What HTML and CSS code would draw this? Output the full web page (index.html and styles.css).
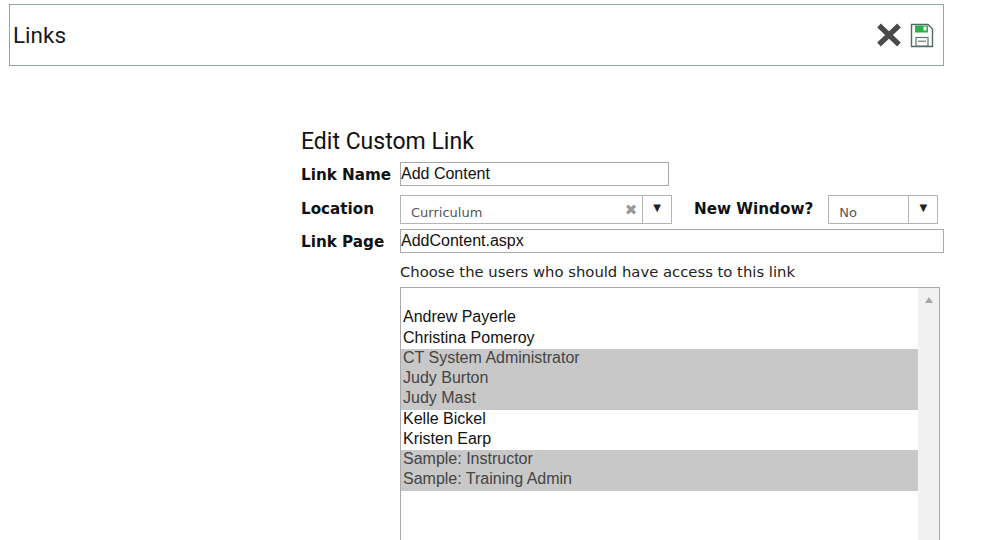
FILE: index.html
```html
<!DOCTYPE html>
<html lang="en">
<head>
<meta charset="utf-8">
<title>Links</title>
<link rel="stylesheet" href="styles.css">
</head>
<body>
<header class="topbar">
  <h1 class="title">Links</h1>
  <div class="actions">
    <svg class="icon-close" width="26" height="24" viewBox="0 0 26 24" aria-label="Close"><path d="M3 2.5 23 21.5M23 2.5 3 21.5" fill="none" stroke="#4a4a4a" stroke-width="5.2"/></svg>
    <svg class="icon-save" width="24" height="25" viewBox="0 0 24 25" aria-label="Save">
      <path d="M1.5 1.5H18L22.5 6V23.5H1.5Z" fill="#fff" stroke="#4d6b62" stroke-width="1.4"/>
      <rect x="5" y="2.5" width="13" height="7" fill="#2fae4e"/>
      <rect x="13.5" y="3.5" width="3" height="4" fill="#e8f5ea"/>
      <rect x="6" y="14.5" width="12" height="8.5" fill="#fff" stroke="#66706c" stroke-width="1.2"/>
      <rect x="8" y="17.5" width="8" height="1.6" fill="#8a9490"/>
    </svg>
  </div>
</header>

<main class="form">
  <h2 class="heading">Edit Custom Link</h2>
  <div class="row row-name">
    <div class="label">Link Name</div>
    <div class="field field-name">Add Content</div>
  </div>
  <div class="row row-location">
    <div class="label label-loc">Location</div>
    <div class="select select-location">
      <span class="select-value">Curriculum</span>
      <span class="clear">✖</span>
      <span class="arrow">▼</span>
    </div>
    <div class="label label-window">New Window?</div>
    <div class="select select-window">
      <span class="select-value">No</span>
      <span class="arrow">▼</span>
    </div>
  </div>
  <div class="row row-page">
    <div class="label">Link Page</div>
    <div class="field field-page">AddContent.aspx</div>
  </div>
  <div class="hint">Choose the users who should have access to this link</div>
  <div class="listbox">
    <div class="options">
      <div class="option blank">&nbsp;</div>
      <div class="option">Andrew Payerle</div>
      <div class="option">Christina Pomeroy</div>
      <div class="option selected">CT System Administrator</div>
      <div class="option selected">Judy Burton</div>
      <div class="option selected">Judy Mast</div>
      <div class="option">Kelle Bickel</div>
      <div class="option">Kristen Earp</div>
      <div class="option selected">Sample: Instructor</div>
      <div class="option selected">Sample: Training Admin</div>
    </div>
    <div class="scrollbar"><span class="scroll-up"></span></div>
  </div>
</main>
</body>
</html>
```

FILE: styles.css
```css
html, body {
  margin: 0;
  height: 540px;
  overflow: hidden;
  background: #fff;
}
body {
  padding: 4px 0 0 9px;
  box-sizing: border-box;
  color: #000;
  font-family: "Liberation Sans", Arial, sans-serif;
}
.topbar {
  width: 935px;
  height: 62px;
  box-sizing: border-box;
  border: 1px solid #8fa6a6;
  display: flex;
  align-items: center;
  justify-content: space-between;
  padding: 0 9px 0 3px;
}
.title {
  margin: 0;
  font: 400 22.5px/1 Roboto, sans-serif;
  color: #1a1a1a;
}
.actions {
  display: flex;
  align-items: center;
  gap: 8px;
}
.form {
  margin: 58px 0 0 292px;
  width: 643px;
}
.heading {
  margin: 0;
  font: 400 23px/36px Roboto, sans-serif;
  height: 38px;
  color: #111;
}
.row {
  display: flex;
  align-items: flex-start;
}
.label {
  width: 99px;
  flex: none;
  font: 700 15.2px/26px "DejaVu Sans", Verdana, sans-serif;
  color: #111;
}
.field {
  box-sizing: border-box;
  height: 24px;
  border: 1px solid #a9a9a9;
  padding: 0;
  font: 400 16px/22px "Liberation Sans", Arial, sans-serif;
  color: #111;
}
.field-name { width: 269px; }
.field-page { width: 544px; }
.row-name { height: 33px; }
.row-location { height: 34px; }
.row-page { height: 34px; }
.label-loc { line-height: 28px; }
.select {
  box-sizing: border-box;
  height: 29px;
  border: 1px solid #b4b4b4;
  display: flex;
  font: 400 13px/1 "DejaVu Sans", Verdana, sans-serif;
  color: #555;
}
.select-value {
  flex: 1;
  padding: 10px 0 0 10px;
}
.select-location { width: 272px; }
.select-window { width: 110px; }
.clear {
  width: 22px;
  font-size: 15px;
  color: #999;
  padding-top: 7px;
  text-align: center;
}
.arrow {
  width: 29px;
  box-sizing: border-box;
  border-left: 1px solid #b4b4b4;
  font-size: 10px;
  color: #222;
  text-align: center;
  padding-top: 7px;
}
.label-window {
  width: auto;
  margin: 0 15px 0 22px;
  line-height: 28px;
}
.hint {
  margin-left: 99px;
  height: 24px;
  font: 400 14.8px/18px "DejaVu Sans", Verdana, sans-serif;
  color: #222;
}
.listbox {
  margin-left: 99px;
  width: 540px;
  height: 300px;
  box-sizing: border-box;
  border: 1px solid #a9a9a9;
  display: flex;
}
.options {
  flex: 1;
  padding-top: 8px;
}
.option {
  height: 20.25px;
  line-height: 18px;
  padding-left: 2px;
  font-size: 16px;
  color: #111;
}
.option.blank { height: 12.3px; line-height: 12px; }
.option.selected {
  background: #c8c8c8;
  color: #444;
}
.scrollbar {
  width: 21px;
  background: #f1f1f1;
  display: flex;
  justify-content: center;
}
.scroll-up {
  margin-top: 9px;
  width: 0;
  height: 0;
  border-left: 4.5px solid transparent;
  border-right: 4.5px solid transparent;
  border-bottom: 6px solid #a8a8a8;
}
```
